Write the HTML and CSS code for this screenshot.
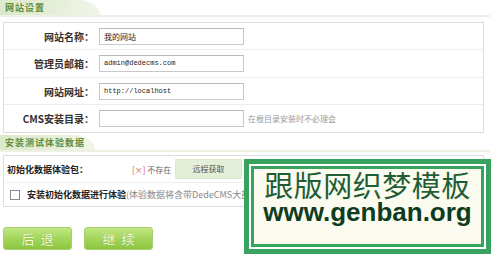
FILE: index.html
```html
<!DOCTYPE html>
<html lang="zh-CN">
<head>
<meta charset="utf-8">
<title>安装</title>
<link rel="stylesheet" href="styles.css">
</head>
<body>
<div class="page">
  <div class="sect-head"><span class="tab tab-short">网站设置</span></div>
  <div class="box">
    <div class="row">
      <div class="label">网站名称：</div>
      <div class="field"><span class="input cjk">我的网站</span></div>
    </div>
    <div class="row">
      <div class="label">管理员邮箱：</div>
      <div class="field"><span class="input mono">admin@dedecms.com</span></div>
    </div>
    <div class="row">
      <div class="label">网站网址：</div>
      <div class="field"><span class="input mono">http://localhost</span></div>
    </div>
    <div class="row">
      <div class="label">CMS安装目录：</div>
      <div class="field"><span class="input"></span><span class="hint">在根目录安装时不必理会</span></div>
    </div>
  </div>

  <div class="sect-head sect-head-2"><span class="tab tab-long">安装测试体验数据</span></div>
  <div class="box box2">
    <div class="row2">
      <div class="label2">初始化数据体验包：</div>
      <div class="status"><span class="x">[×]</span> 不存在</div>
      <div class="fetch">远程获取</div>
    </div>
    <div class="row2 row2b">
      <span class="check"></span>
      <span class="strong">安装初始化数据进行体验</span><span class="note">(体验数据将含带DedeCMS大部分演示数据)</span>
    </div>
  </div>

  <div class="buttons">
    <div class="btn">后退</div>
    <div class="btn">继续</div>
  </div>

  <div class="watermark">
    <div class="wm-inner">
      <div class="wm-cn">跟版网织梦模板</div>
      <div class="wm-en">www.genban.org</div>
    </div>
  </div>
</div>
</body>
</html>
```

FILE: styles.css
```css
html, body {
  margin: 0;
  padding: 0;
  background: #ffffff;
}

body {
  width: 500px;
  height: 256px;
  overflow: hidden;
  font-family: "Noto Sans CJK SC", "Liberation Sans", sans-serif;
  color: #333;
}

.page {
  position: relative;
  width: 500px;
  height: 256px;
}

.sect-head {
  width: 490px;
  height: 15px;
  border-bottom: 2px solid #eef0e4;
  display: flex;
}

.sect-head-2 {
  margin-top: 2px;
}

.tab {
  display: block;
  height: 15px;
  padding-left: 5px;
  font-size: 9px;
  line-height: 16px;
  font-weight: bold;
  letter-spacing: 1px;
  color: #5f8e3c;
  background: linear-gradient(to right, #dce9ca 0%, #e6efda 60%, #f1f6ea 100%);
  border-top-right-radius: 20px 15px;
}

.tab-short { width: 95px; }
.tab-long { width: 90px; }

.box {
  margin-top: 5px;
  margin-left: 3px;
  width: 479px;
  border: 1px solid #dedede;
  background: #fff;
}

.row {
  display: grid;
  grid-template-columns: 90px 1fr;
  column-gap: 5px;
  align-items: center;
  height: 26px;
  border-bottom: 1px solid #eeeeee;
}

.row:nth-child(even) {
  height: 27px;
}

.row:last-child {
  border-bottom: none;
}

.label {
  text-align: right;
  font-size: 10px;
  font-weight: bold;
  color: #333;
  white-space: nowrap;
}

.field {
  display: flex;
  align-items: center;
  gap: 4px;
}

.input {
  display: block;
  box-sizing: border-box;
  width: 145px;
  height: 17px;
  border: 1px solid #c9c9c9;
  border-top-color: #b9b9b9;
  background: #fff;
  padding-left: 4px;
  line-height: 15px;
  color: #222;
  white-space: nowrap;
}

.cjk {
  font-size: 8px;
}

.mono {
  font-family: "Liberation Mono", monospace;
  font-size: 7px;
}

.hint {
  font-size: 8px;
  color: #999;
  white-space: nowrap;
}

.box2 {
  margin-top: 3px;
}

.row2 {
  display: flex;
  align-items: center;
  height: 26px;
  border-bottom: 1px solid #f0f0f0;
  padding-left: 3px;
}

.row2b {
  height: 23px;
  border-bottom: none;
  padding-left: 6px;
  white-space: nowrap;
}

.label2 {
  width: 125px;
  font-size: 9px;
  font-weight: bold;
  color: #222;
}

.status {
  font-size: 8px;
  color: #666;
  width: 43px;
  white-space: nowrap;
}

.x {
  color: #d05050;
}

.fetch {
  width: 67px;
  height: 20px;
  box-sizing: border-box;
  background: #e5eed8;
  border: 1px solid #dfe8d2;
  font-size: 8px;
  line-height: 18px;
  text-align: center;
  color: #555;
}

.check {
  display: block;
  width: 8px;
  height: 8px;
  border: 1px solid #8a8a8a;
  background: #fff;
  margin-right: 7px;
}

.strong {
  font-size: 9px;
  font-weight: bold;
  color: #222;
}

.note {
  font-size: 9px;
  color: #888;
}

.buttons {
  display: flex;
  gap: 12px;
  margin-top: 20px;
  margin-left: 3px;
}

.btn {
  width: 69px;
  height: 23px;
  box-sizing: border-box;
  border: 1px solid #a6d06e;
  border-radius: 3px;
  background: linear-gradient(to bottom, #c2e684 0%, #a6d860 45%, #8cc63f 100%);
  text-align: center;
  font-size: 13px;
  line-height: 21px;
  letter-spacing: 6px;
  padding-left: 6px;
  color: #f4fbe6;
  text-shadow: 0 0 1px #6a9a2c;
}

.watermark {
  position: absolute;
  left: 244px;
  top: 159px;
  width: 247px;
  height: 95px;
  box-sizing: border-box;
  border: 5px solid #38a25f;
  padding: 2px;
  background: #ffffff;
}

.wm-inner {
  box-sizing: border-box;
  height: 100%;
  border: 3px solid #38a25f;
  background: #fbfbef;
  text-align: center;
  padding-top: 1px;
}

.wm-cn {
  font-family: "Noto Sans CJK SC", sans-serif;
  font-size: 29px;
  line-height: 29px;
  letter-spacing: 0.5px;
  color: #1f5e35;
  white-space: nowrap;
}

.wm-en {
  font-family: "Liberation Sans", sans-serif;
  font-weight: bold;
  font-size: 26px;
  line-height: 27px;
  color: #0e3c20;
  white-space: nowrap;
}
```
